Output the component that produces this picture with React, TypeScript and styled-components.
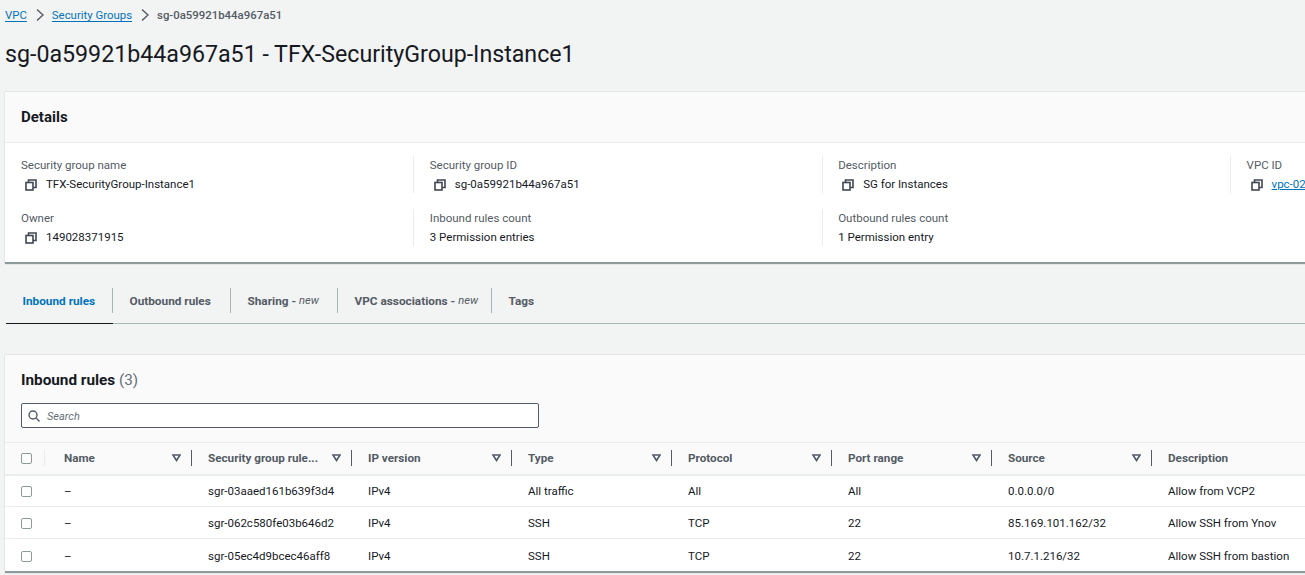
import * as React from "react";
import styled, { createGlobalStyle } from "styled-components";

const GlobalStyle = createGlobalStyle`
	html, body {
		margin: 0;
		padding: 0;
		height: 575px;
		overflow: hidden;
		background: #f2f3f3;
		font-family: Roboto, "Noto Sans", sans-serif;
		font-size: 11.5px;
		color: #16191f;
	}
`;

const Page = styled.div`
	width: 1305px;
	height: 575px;
	overflow: hidden;
	padding-left: 5px;
	box-sizing: border-box;
`;

const Breadcrumbs = styled.nav`
	display: flex;
	align-items: center;
	height: 30px;
	font-size: 11.4px;
`;

const Crumb = styled.a`
	color: #0073bb;
	text-decoration: underline;
	text-underline-offset: 2px;
`;

const CrumbCurrent = styled.span`
	color: #545b64;
	font-weight: 500;
`;

const CrumbArrow = styled.svg`
	width: 8px;
	height: 12px;
	margin: 0 8px 0 9px;
	fill: none;
	stroke: #545b64;
	stroke-width: 1.4;
`;

const Title = styled.h1`
	margin: 8px 0 0;
	height: 54px;
	font-size: 23.2px;
	line-height: 32px;
	font-weight: 400;
`;

const Card = styled.section`
	width: 1340px;
	background: #fff;
	border-bottom: 2px solid #8d9a9a;
	box-shadow: 0 0 1px rgba(0, 28, 36, 0.3);
`;

const CardHeader = styled.header`
	height: 50px;
	padding-left: 16px;
	display: flex;
	align-items: center;
	background: #fafafa;
	border-bottom: 1px solid #eaeded;
	font-size: 15px;
	font-weight: 700;
`;

const DetailsGrid = styled.div`
	display: grid;
	grid-template-columns: repeat(4, 408.4px);
	grid-auto-rows: 37px;
	row-gap: 16px;
	padding: 13px 0 16px 0;
`;

const Field = styled.div<{ $first?: boolean }>`
	padding-left: ${(p) => (p.$first ? "16px" : "15.4px")};
	border-left: ${(p) => (p.$first ? "none" : "1px solid #eaeded")};
`;

const FieldLabel = styled.div`
	color: #545b64;
	line-height: 19px;
`;

const FieldValue = styled.div`
	display: flex;
	align-items: center;
	line-height: 19px;
`;

const CopyIcon = styled.svg`
	width: 12px;
	height: 12px;
	margin: 0 9px 0 4px;
	fill: none;
	stroke: #414750;
	stroke-width: 1.6;
	flex: none;
`;

const ValueLink = styled.a`
	color: #0073bb;
	text-decoration: underline;
`;

const Tabs = styled.div`
	display: flex;
	align-items: stretch;
	height: 35px;
	margin: 24px 0 31px 1px;
	border-bottom: 1px solid #aab7b8;
`;

const Tab = styled.div<{ $active?: boolean; $last?: boolean; $width: number }>`
	display: flex;
	align-items: center;
	gap: 3px;
	box-sizing: border-box;
	width: ${(p) => p.$width}px;
	height: 25px;
	padding-left: 16.5px;
	white-space: nowrap;
	color: ${(p) => (p.$active ? "#0073bb" : "#545b64")};
	font-weight: 700;
	font-size: 11.8px;
	border-right: ${(p) => (p.$last ? "none" : "1px solid #aab7b8")};
	box-shadow: ${(p) => (p.$active ? "0 10px 0 0 #f2f3f3, 0 11px 0 0 #16191f" : "none")};
	em {
		font-weight: 400;
		font-size: 11.2px;
	}
`;

const TableTitle = styled.h2`
	margin: 0;
	padding: 15px 0 0 16px;
	height: 33px;
	font-size: 15.3px;
	line-height: 20px;
	font-weight: 700;
	span {
		color: #687078;
		font-weight: 400;
	}
`;

const TableHead = styled.div`
	background: #fafafa;
	height: 87px;
`;

const SearchBox = styled.div`
	display: flex;
	align-items: center;
	gap: 7px;
	width: 518px;
	height: 25px;
	margin-left: 16px;
	padding: 1px 0 0 6px;
	box-sizing: border-box;
	background: #fff;
	border: 1px solid #545b64;
	border-radius: 2px;
	color: #687078;
	font-style: italic;
	font-size: 11px;
`;

const SearchIcon = styled.svg`
	width: 12px;
	height: 12px;
	fill: none;
	stroke: #545b64;
	stroke-width: 1.4;
`;

const Table = styled.table`
	width: 1307px;
	table-layout: fixed;
	border-collapse: collapse;
	background: #fff;
`;

const Th = styled.th`
	height: 32px;
	padding: 0 0 0 16px;
	box-sizing: border-box;
	background: #fafafa;
	border-top: 1px solid #eaeded;
	border-bottom: 2px solid #eaeded;
	text-align: left;
	color: #545b64;
	font-size: 11.7px;
	font-weight: 700;
	&:nth-child(2) {
		padding-left: 19px;
	}
`;

const HeadCell = styled.div`
	display: flex;
	align-items: center;
	justify-content: space-between;
	height: 16px;
	padding-right: 10px;
	border-right: 1px solid #545b64;
`;

const CheckHead = styled.div`
	height: 16px;
	display: flex;
	align-items: center;
	border-right: 1px solid #eaeded;
`;

const Caret = styled.svg`
	width: 9px;
	height: 8px;
	fill: none;
	stroke: #545b64;
	stroke-width: 1.6;
	flex: none;
`;

const Td = styled.td`
	height: 32px;
	padding: 1px 0 0 16px;
	border-bottom: 1px solid #eaeded;
	box-sizing: border-box;
	white-space: nowrap;
	&:nth-child(2) {
		padding-left: 19px;
	}
	tr:last-child & {
		padding-top: 3px;
		border-bottom: none;
	}
`;

const Checkbox = styled.span`
	display: block;
	width: 9px;
	height: 9px;
	background: #fff;
	border: 1px solid #8d9a9a;
	border-radius: 2px;
`;

const columns = [
	"Name",
	"Security group rule...",
	"IP version",
	"Type",
	"Protocol",
	"Port range",
	"Source",
	"Description",
];

const rules = [
	["–", "sgr-03aaed161b639f3d4", "IPv4", "All traffic", "All", "All", "0.0.0.0/0", "Allow from VCP2"],
	["–", "sgr-062c580fe03b646d2", "IPv4", "SSH", "TCP", "22", "85.169.101.162/32", "Allow SSH from Ynov"],
	["–", "sgr-05ec4d9bcec46aff8", "IPv4", "SSH", "TCP", "22", "10.7.1.216/32", "Allow SSH from bastion"],
];

const Copy = () => (
	<CopyIcon viewBox="0 0 12 12">
		<rect x="1" y="3.5" width="7" height="7.5" />
		<path d="M3.5 3.5V1H11v7.5H8" />
	</CopyIcon>
);

const Arrow = () => (
	<CrumbArrow viewBox="0 0 8 12">
		<path d="M1 .5l6 5.5-6 5.5" />
	</CrumbArrow>
);

const App: React.FC = () => {
	return (
		<Page>
			<GlobalStyle />
			<Breadcrumbs>
				<Crumb>VPC</Crumb>
				<Arrow />
				<Crumb>Security Groups</Crumb>
				<Arrow />
				<CrumbCurrent>sg-0a59921b44a967a51</CrumbCurrent>
			</Breadcrumbs>
			<Title>sg-0a59921b44a967a51 - TFX-SecurityGroup-Instance1</Title>

			<Card>
				<CardHeader>Details</CardHeader>
				<DetailsGrid>
					<Field $first>
						<FieldLabel>Security group name</FieldLabel>
						<FieldValue><Copy />TFX-SecurityGroup-Instance1</FieldValue>
					</Field>
					<Field>
						<FieldLabel>Security group ID</FieldLabel>
						<FieldValue><Copy />sg-0a59921b44a967a51</FieldValue>
					</Field>
					<Field>
						<FieldLabel>Description</FieldLabel>
						<FieldValue><Copy />SG for Instances</FieldValue>
					</Field>
					<Field>
						<FieldLabel>VPC ID</FieldLabel>
						<FieldValue><Copy /><ValueLink>vpc-02</ValueLink></FieldValue>
					</Field>
					<Field $first>
						<FieldLabel>Owner</FieldLabel>
						<FieldValue><Copy />149028371915</FieldValue>
					</Field>
					<Field>
						<FieldLabel>Inbound rules count</FieldLabel>
						<FieldValue>3 Permission entries</FieldValue>
					</Field>
					<Field>
						<FieldLabel>Outbound rules count</FieldLabel>
						<FieldValue>1 Permission entry</FieldValue>
					</Field>
				</DetailsGrid>
			</Card>

			<Tabs>
				<Tab $active $width={107}>Inbound rules</Tab>
				<Tab $width={118}>Outbound rules</Tab>
				<Tab $width={107}>Sharing - <em>new</em></Tab>
				<Tab $width={154}>VPC associations - <em>new</em></Tab>
				<Tab $last $width={60}>Tags</Tab>
			</Tabs>

			<Card>
				<TableHead>
					<TableTitle>Inbound rules <span>(3)</span></TableTitle>
					<SearchBox>
						<SearchIcon viewBox="0 0 12 12">
							<circle cx="5" cy="5" r="4" />
							<path d="M8 8l3.5 3.5" />
						</SearchIcon>
						Search
					</SearchBox>
				</TableHead>
				<Table>
					<colgroup>
						<col style={{ width: 40 }} />
						<col style={{ width: 147 }} />
						{columns.slice(1).map((c) => (
							<col key={c} style={{ width: 160 }} />
						))}
					</colgroup>
					<thead>
						<tr>
							<Th>
								<CheckHead><Checkbox /></CheckHead>
							</Th>
							{columns.map((c) => (
								<Th key={c}>
									{c === "Description" ? (
										c
									) : (
										<HeadCell>
											{c}
											<Caret viewBox="0 0 9 8">
												<path d="M1 1h7L4.5 6.5z" />
											</Caret>
										</HeadCell>
									)}
								</Th>
							))}
						</tr>
					</thead>
					<tbody>
						{rules.map((r) => (
							<tr key={r[1]}>
								<Td><Checkbox /></Td>
								{r.map((v, i) => (
									<Td key={i}>{v}</Td>
								))}
							</tr>
						))}
					</tbody>
				</Table>
			</Card>
		</Page>
	);
};

export default App;
